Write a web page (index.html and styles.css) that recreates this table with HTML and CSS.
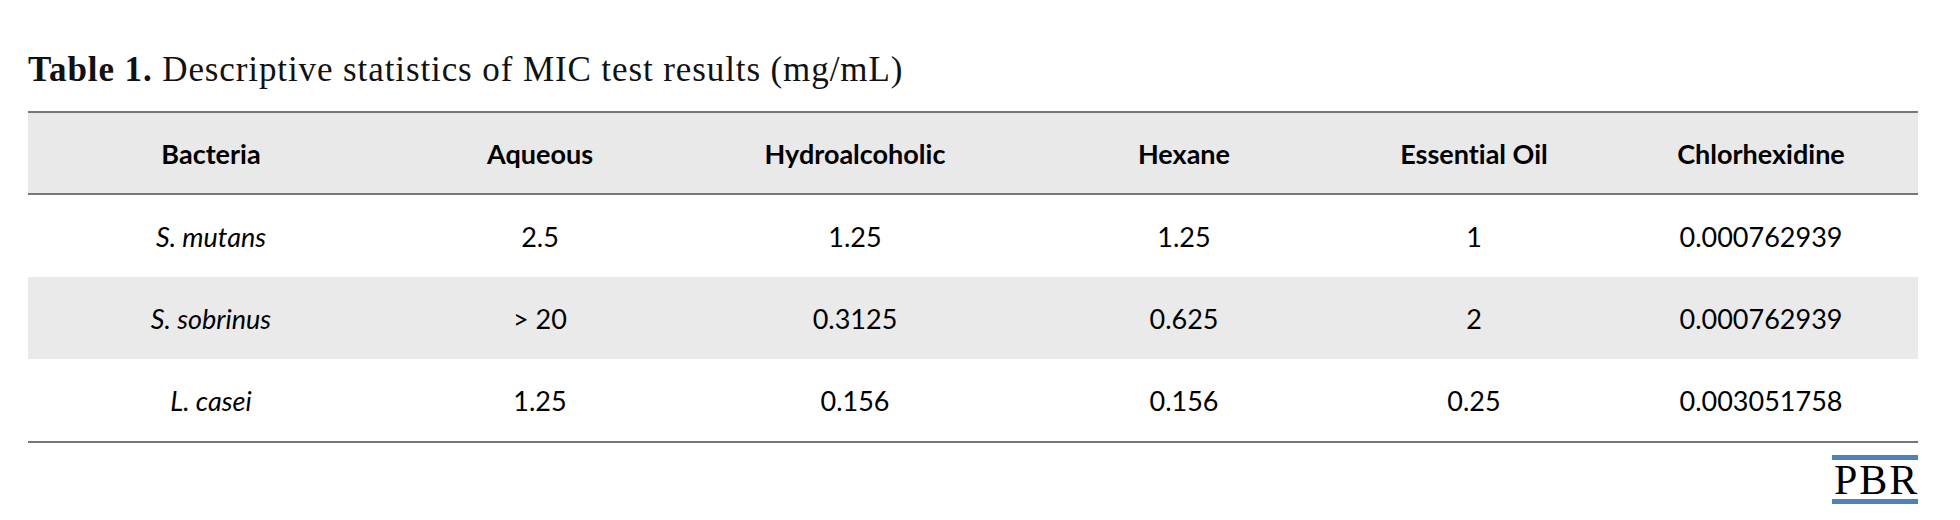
FILE: index.html
```html
<!DOCTYPE html>
<html lang="en">
<head>
<meta charset="utf-8">
<title>Table 1</title>
<link rel="stylesheet" href="styles.css">
</head>
<body>
<div class="page">
  <p class="caption"><b>Table 1.</b> Descriptive statistics of MIC test results (mg/mL)</p>
  <table class="stats">
    <colgroup>
      <col class="c1"><col class="c2"><col class="c3"><col class="c4"><col class="c5"><col class="c6">
    </colgroup>
    <thead>
      <tr>
        <th>Bacteria</th><th>Aqueous</th><th>Hydroalcoholic</th><th>Hexane</th><th>Essential Oil</th><th>Chlorhexidine</th>
      </tr>
    </thead>
    <tbody>
      <tr>
        <td class="sp">S. mutans</td><td>2.5</td><td>1.25</td><td>1.25</td><td>1</td><td>0.000762939</td>
      </tr>
      <tr class="band">
        <td class="sp">S. sobrinus</td><td>&gt; 20</td><td>0.3125</td><td>0.625</td><td>2</td><td>0.000762939</td>
      </tr>
      <tr>
        <td class="sp">L. casei</td><td>1.25</td><td>0.156</td><td>0.156</td><td>0.25</td><td>0.003051758</td>
      </tr>
    </tbody>
  </table>
  <div class="footer">
    <div class="logo">
      <div class="bar"></div>
      <div class="logo-text">PBR</div>
      <div class="bar"></div>
    </div>
  </div>
</div>
</body>
</html>
```
FILE: styles.css
```css
html, body {
  margin: 0;
  padding: 0;
  background: #ffffff;
}

.page {
  width: 1890px;
  padding: 50px 0 0 28px;
}

.caption {
  margin: 0 0 21px 0;
  font-family: "Liberation Serif", serif;
  font-size: 35px;
  line-height: 40px;
  letter-spacing: 0.9px;
  color: #111111;
  white-space: nowrap;
}

.caption b {
  font-weight: bold;
}

.stats {
  width: 1890px;
  border-collapse: collapse;
  table-layout: fixed;
  font-family: Lato, "Noto Sans", sans-serif;
  font-size: 27px;
  font-variant-ligatures: none;
  color: #000000;
}

.c1 { width: 366px; }
.c2 { width: 292px; }
.c3 { width: 338px; }
.c4 { width: 320px; }
.c5 { width: 260px; }
.c6 { width: 314px; }

.stats thead tr {
  background: #e9e9e9;
  border-top: 2px solid #777777;
  border-bottom: 2px solid #777777;
}

.stats th {
  height: 80px;
  padding: 0;
  font-weight: bold;
  text-align: center;
  vertical-align: middle;
}

.stats td {
  height: 82px;
  padding: 0;
  text-align: center;
  vertical-align: middle;
  font-weight: normal;
}

.stats tbody tr:last-child {
  border-bottom: 2px solid #777777;
}

.stats .band {
  background: #eaeaea;
}

.stats .sp {
  font-style: italic;
}

.footer {
  display: flex;
  justify-content: flex-end;
  padding-top: 12px;
}

.logo {
  display: flex;
  flex-direction: column;
  width: 86px;
}

.bar {
  height: 5px;
  background: #4f81bd;
}

.logo-text {
  margin: 3px 0 2px 0;
  font-family: "Liberation Serif", serif;
  font-size: 42px;
  line-height: 34px;
  letter-spacing: 2px;
  text-align: center;
  color: #000000;
  padding-left: 2px;
}
```
